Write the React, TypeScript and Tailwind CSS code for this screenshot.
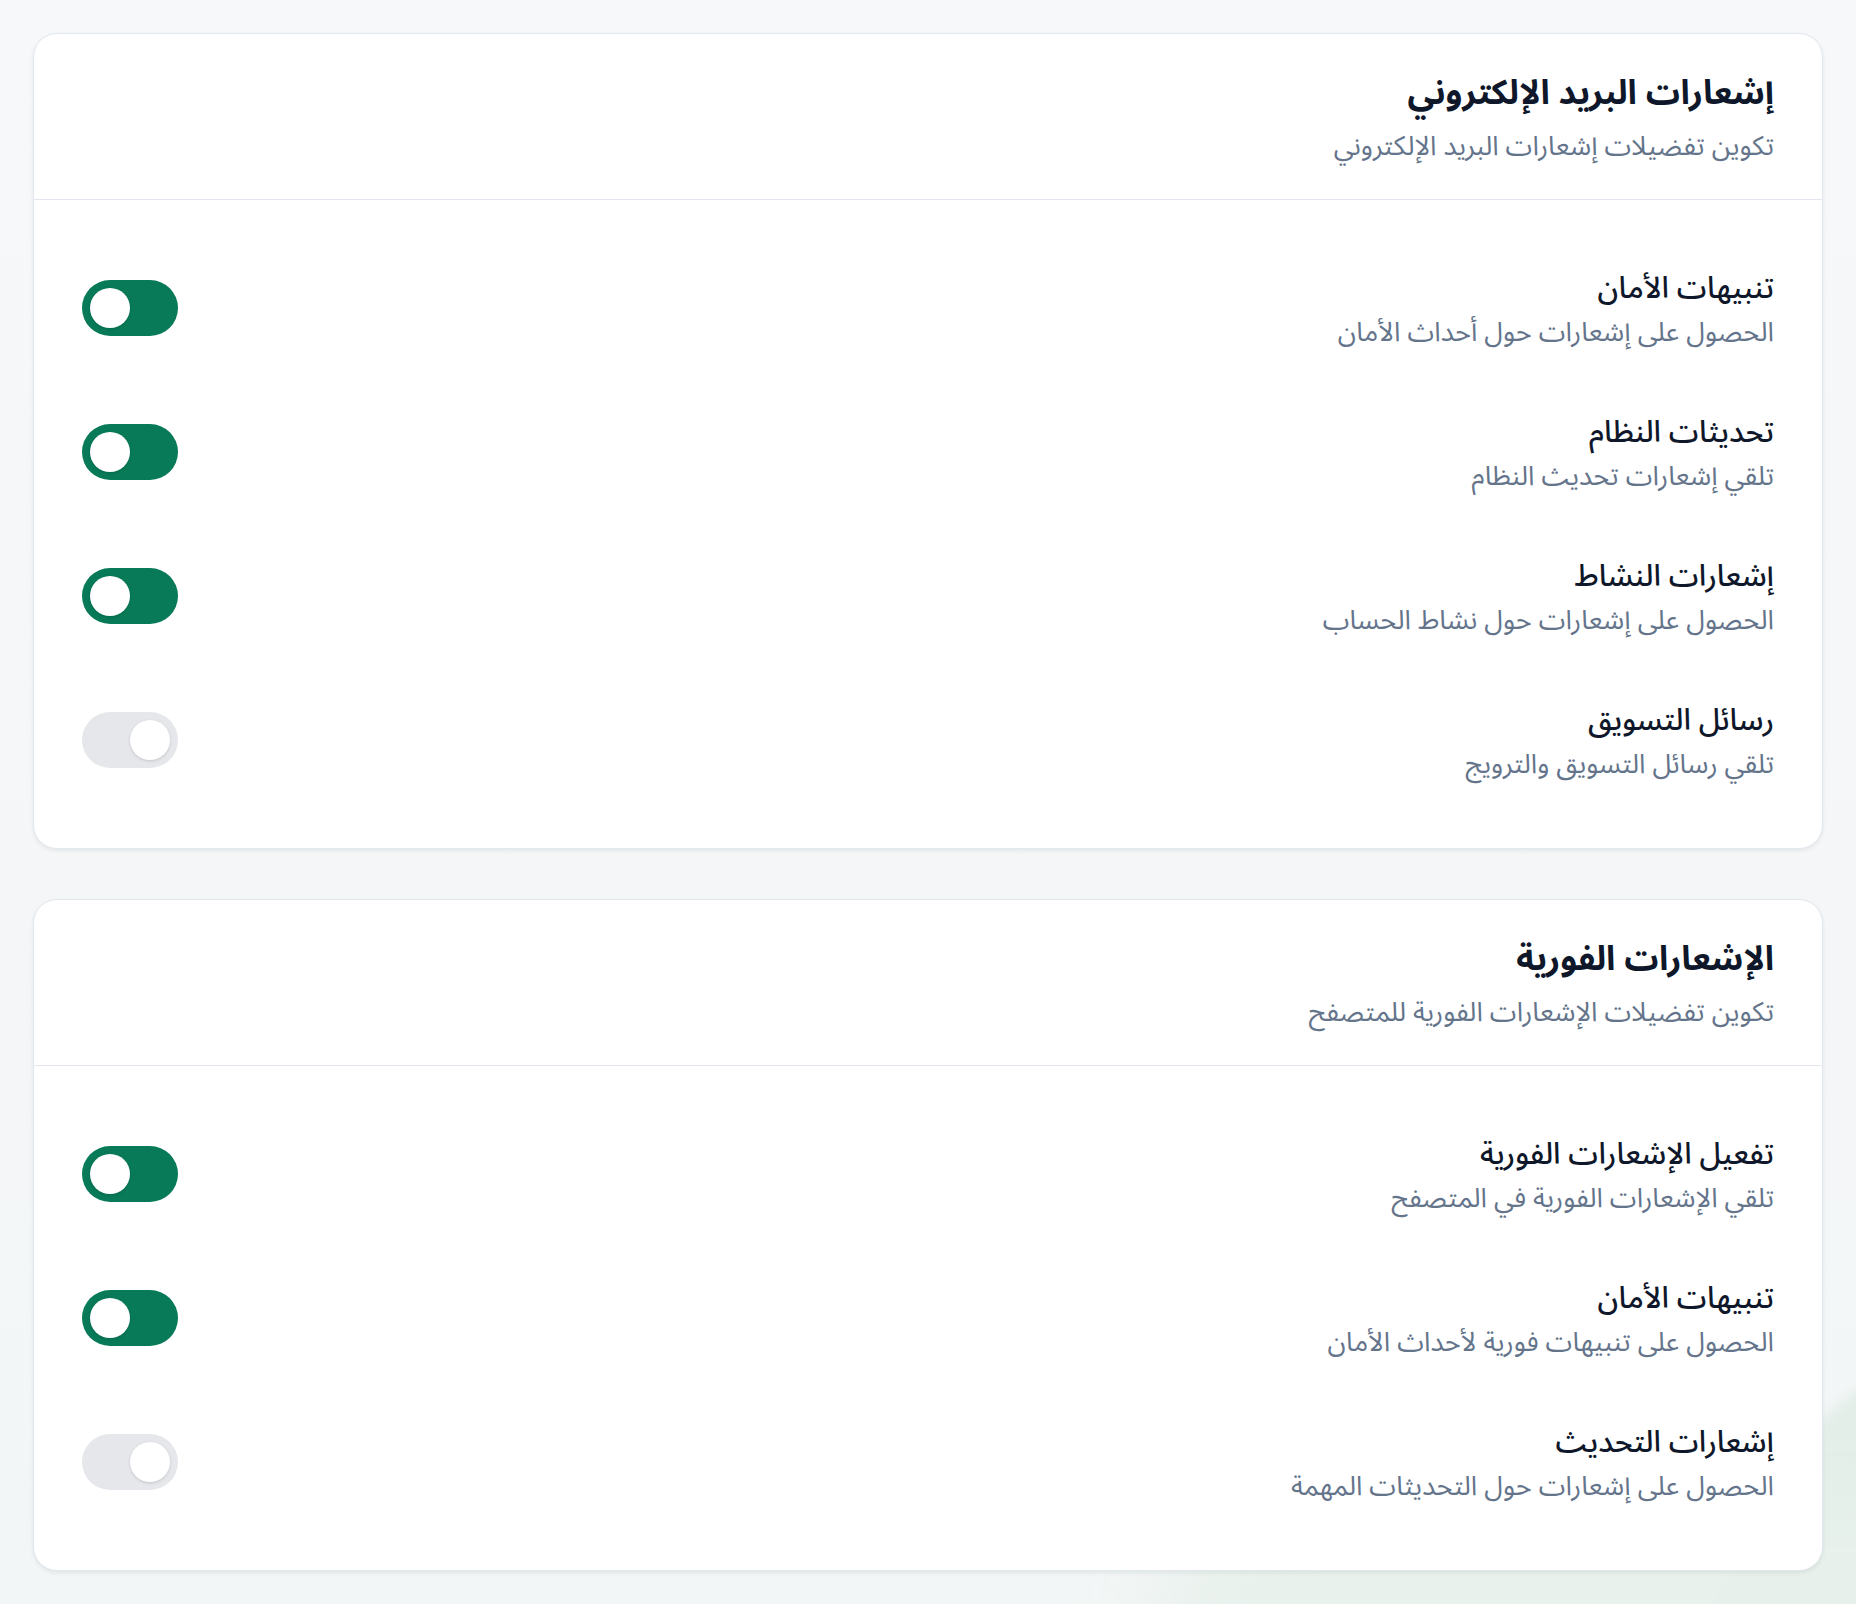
import React, { useState } from "react";

type Item = { title: string; desc: string; on: boolean };

const emailItems: Item[] = [
  { title: "تنبيهات الأمان", desc: "الحصول على إشعارات حول أحداث الأمان", on: true },
  { title: "تحديثات النظام", desc: "تلقي إشعارات تحديث النظام", on: true },
  { title: "إشعارات النشاط", desc: "الحصول على إشعارات حول نشاط الحساب", on: true },
  { title: "رسائل التسويق", desc: "تلقي رسائل التسويق والترويج", on: false },
];

const pushItems: Item[] = [
  { title: "تفعيل الإشعارات الفورية", desc: "تلقي الإشعارات الفورية في المتصفح", on: true },
  { title: "تنبيهات الأمان", desc: "الحصول على تنبيهات فورية لأحداث الأمان", on: true },
  { title: "إشعارات التحديث", desc: "الحصول على إشعارات حول التحديثات المهمة", on: false },
];

function Toggle({ initial }: { initial: boolean }) {
  const [on, setOn] = useState(initial);
  return (
    <button
      type="button"
      role="switch"
      aria-checked={on}
      dir="ltr"
      onClick={() => setOn(!on)}
      className={
        "flex h-[56px] w-[96px] shrink-0 items-center rounded-full p-[8px] transition-colors " +
        (on ? "justify-start bg-[#087a58]" : "justify-end bg-[#e5e7eb]")
      }
    >
      <span className="block h-[40px] w-[40px] rounded-full bg-white shadow-[0_1px_3px_rgba(0,0,0,0.15)]" />
    </button>
  );
}

function Row({ item }: { item: Item }) {
  return (
    <div className="flex h-[80px] items-center justify-between">
      <div className="flex flex-col pt-[4px]">
        <div className="text-[30px] font-medium leading-[40px] text-[#0f172a]">{item.title}</div>
        <div className="mt-[6px] text-[27px] leading-[36px] text-[#64748b]">{item.desc}</div>
      </div>
      <Toggle initial={item.on} />
    </div>
  );
}

function Card({ title, subtitle, items }: { title: string; subtitle: string; items: Item[] }) {
  return (
    <section className="rounded-[24px] border border-[#e2e6ee] bg-white shadow-[0_2px_4px_rgba(15,23,42,0.07)]">
      <header className="h-[166px] border-b border-[#e2e6ee] px-[48px] pt-[37px]">
        <h2 className="text-[34px] font-bold leading-[44px] text-[#0f172a]">{title}</h2>
        <p className="mt-[14px] text-[27px] leading-[36px] text-[#64748b]">{subtitle}</p>
      </header>
      <div className="flex flex-col gap-[64px] px-[48px] py-[68px]">
        {items.map((it, i) => (
          <Row key={i} item={it} />
        ))}
      </div>
    </section>
  );
}

export default function App() {
  return (
    <div
      dir="rtl"
      className="relative min-h-[1604px] overflow-hidden bg-gradient-to-b from-[#f7f8f9] to-[#f3f6f6] px-[33px] pb-[32px] pt-[33px]"
      style={{ fontFamily: '"Noto Sans Arabic", "Noto Sans", sans-serif' }}
    >
      <div className="pointer-events-none absolute left-[1920px] top-[1240px] h-[900px] w-[900px] origin-top-left rotate-[30deg] rounded-tl-[260px] bg-[#e3eee9] blur-[6px]" />
      <div className="pointer-events-none absolute -bottom-[150px] left-[1150px] h-[260px] w-[900px] rounded-full bg-[#e8f1ec] opacity-90 blur-[40px]" />
      <div className="relative flex flex-col gap-[50px]">
        <Card
          title="إشعارات البريد الإلكتروني"
          subtitle="تكوين تفضيلات إشعارات البريد الإلكتروني"
          items={emailItems}
        />
        <Card
          title="الإشعارات الفورية"
          subtitle="تكوين تفضيلات الإشعارات الفورية للمتصفح"
          items={pushItems}
        />
      </div>
    </div>
  );
}
